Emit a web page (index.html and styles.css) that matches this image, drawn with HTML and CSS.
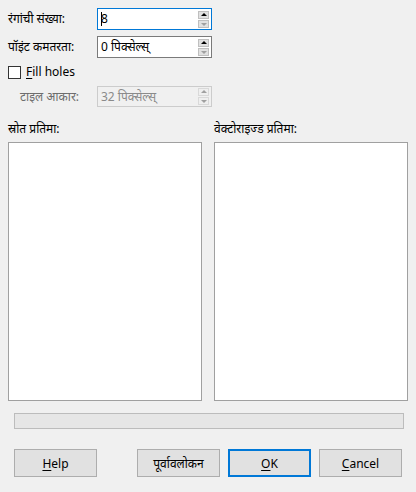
FILE: index.html
```html
<!DOCTYPE html>
<html>
<head>
<meta charset="utf-8">
<link rel="stylesheet" href="styles.css">
</head>
<body>
<div class="dialog">
  <div class="row r1">
    <span class="label">रंगांची संख्या:</span>
    <div class="spin focus">
      <span class="value"><span class="caret"></span>8</span>
      <div class="btns"><span class="sb up"></span><span class="sb down dim"></span></div>
    </div>
  </div>
  <div class="row r2">
    <span class="label">पॉइंट कमतरता:</span>
    <div class="spin">
      <span class="value">0 पिक्सेल्स्</span>
      <div class="btns"><span class="sb up"></span><span class="sb down dim"></span></div>
    </div>
  </div>
  <div class="row r3">
    <span class="check"></span><span class="checklabel"><u>F</u>ill holes</span>
  </div>
  <div class="row r4">
    <span class="label indent disabled">टाइल आकार:</span>
    <div class="spin off">
      <span class="value">32 पिक्सेल्स्</span>
      <div class="btns"><span class="sb up dim"></span><span class="sb down dim"></span></div>
    </div>
  </div>
  <div class="images">
    <div class="col">
      <span class="cap">स्रोत प्रतिमा:</span>
      <div class="pic"></div>
    </div>
    <div class="col">
      <span class="cap">वेक्टोराइज्ड प्रतिमा:</span>
      <div class="pic"></div>
    </div>
  </div>
  <div class="progress"></div>
  <div class="buttons">
    <button class="btn"><u>H</u>elp</button>
    <div class="right">
      <button class="btn">पूर्वावलोकन</button>
      <button class="btn def"><u>O</u>K</button>
      <button class="btn"><u>C</u>ancel</button>
    </div>
  </div>
</div>
</body>
</html>
```
FILE: styles.css
```css
html, body {
  margin: 0;
  padding: 0;
  background: #f0f0f0;
}
body {
  width: 416px;
  height: 492px;
  overflow: hidden;
  font-family: "Noto Sans", "Open Sans", sans-serif;
  font-size: 12px;
  color: #000;
}
.dialog {
  padding: 8px 8px 0 8px;
  display: flex;
  flex-direction: column;
}
.row {
  display: flex;
  align-items: center;
}
.r1 { height: 22px; }
.r2 { height: 22px; margin-top: 6px; }
.r3 { height: 16px; margin-top: 6px; }
.r4 { height: 21px; margin-top: 6px; }
.label {
  width: 89px;
  flex: none;
  line-height: 14px;
}
.label.indent {
  width: 77px;
  padding-left: 12px;
}
.disabled { color: #6d6d6d; }
.spin {
  width: 115px;
  height: 22px;
  box-sizing: border-box;
  border: 1px solid #7a7a7a;
  background: #fff;
  display: flex;
  align-items: center;
  justify-content: space-between;
  padding: 0 2px 0 3px;
}
.spin.focus { border-color: #0078d7; }
.spin.off {
  height: 21px;
  border-color: #cccccc;
  background: #f0f0f0;
  color: #8a8a8a;
}
.value {
  display: flex;
  align-items: center;
  line-height: 14px;
}
.caret {
  display: inline-block;
  width: 1px;
  height: 14px;
  background: #000;
  margin-right: -1px;
}
.btns {
  display: flex;
  flex-direction: column;
  gap: 1px;
}
.sb {
  width: 11px;
  height: 8px;
  box-sizing: border-box;
  background: #e1e1e1;
  border: 1px solid #bfbfbf;
  position: relative;
}
.spin.off .sb { background: #efefef; border-color: #d9d9d9; }
.sb::after {
  content: "";
  position: absolute;
  left: 2px;
  width: 0;
  height: 0;
  border-left: 3px solid transparent;
  border-right: 3px solid transparent;
}
.sb.up::after { top: 1px; border-bottom: 3px solid #000; }
.sb.down::after { top: 2px; border-top: 3px solid #000; }
.sb.up.dim::after { border-bottom-color: #a0a0a0; }
.sb.down.dim::after { border-top-color: #a0a0a0; }
.check {
  width: 13px;
  height: 13px;
  box-sizing: border-box;
  border: 1px solid #333;
  background: #fff;
  flex: none;
}
.checklabel {
  margin-left: 5px;
  line-height: 14px;
}
.images {
  display: flex;
  justify-content: space-between;
  margin-top: 14px;
}
.col {
  display: flex;
  flex-direction: column;
  width: 194px;
}
.cap {
  line-height: 15px;
  height: 15px;
}
.pic {
  margin-top: 6px;
  height: 259px;
  background: #fff;
  border: 1px solid #a0a0a0;
  box-sizing: border-box;
}
.progress {
  margin: 12px 4px 0 6px;
  height: 16px;
  box-sizing: border-box;
  background: #e6e6e6;
  border: 1px solid #bcbcbc;
}
.buttons {
  display: flex;
  justify-content: space-between;
  margin: 20px 6px 0 6px;
}
.right {
  display: flex;
  gap: 8px;
}
.btn {
  width: 83px;
  height: 28px;
  box-sizing: border-box;
  background: #e1e1e1;
  border: 1px solid #adadad;
  font-family: "Noto Sans", "Open Sans", sans-serif;
  font-size: 12px;
  color: #000;
  padding: 0;
  margin: 0;
}
.btn.def { border: 2px solid #0078d7; }
u { text-decoration: underline; text-underline-offset: 2px; }
```
